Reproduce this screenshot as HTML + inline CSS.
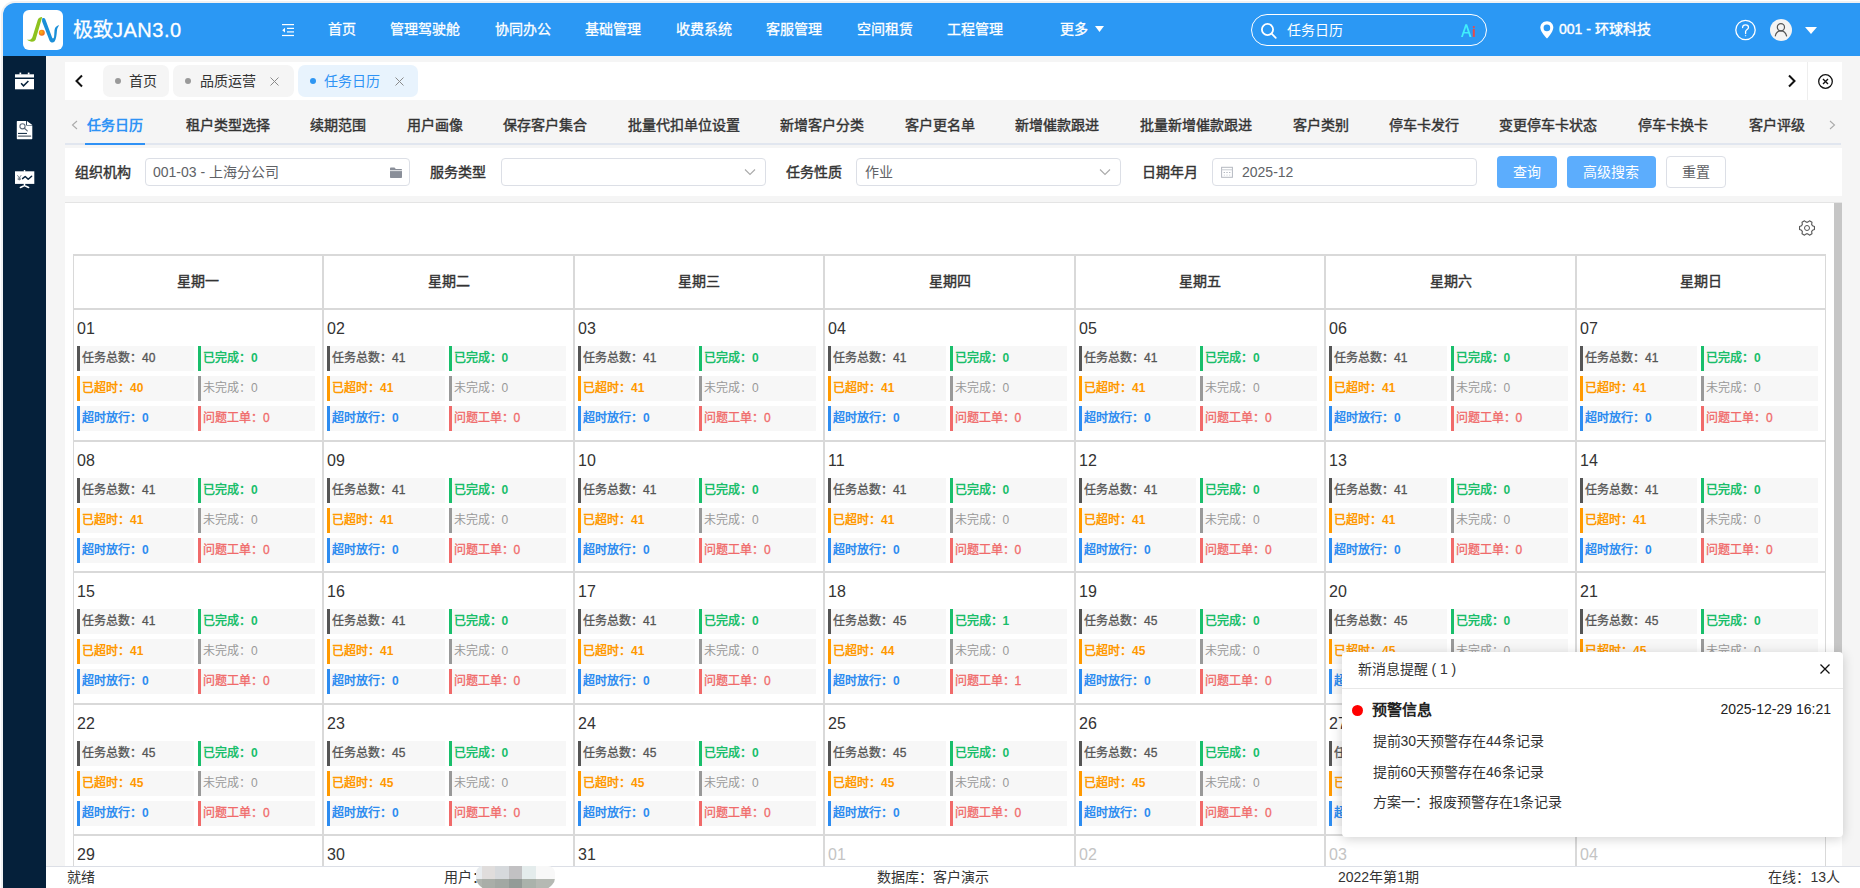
<!DOCTYPE html><html lang="zh-CN"><head><meta charset="utf-8"><title>任务日历</title><style>
*{box-sizing:border-box;margin:0;padding:0}
html,body{width:1860px;height:888px;overflow:hidden;background:#fff}
body{position:relative;font-family:"Liberation Sans",sans-serif;font-size:14px;color:#333}
.a{position:absolute;white-space:nowrap}
.t14{font-size:14px;line-height:20px;height:20px}
.t12{font-size:12px;line-height:16px;height:16px}
.b{font-weight:bold}
.m{font-weight:normal;-webkit-text-stroke:0.4px currentColor}
.m3{-webkit-text-stroke:0.3px currentColor}
</style></head><body>
<div class="a" style="left:1px;top:1px;width:1859px;height:887px;border-top-left-radius:14px;background:#f0f1f3"></div>
<div class="a" style="left:3px;top:3px;width:1857px;height:885px;border-top-left-radius:12px;background:#f5f5f5"></div>
<div class="a" style="left:3px;top:3px;width:1857px;height:53px;background:#2b98f4;border-top-left-radius:12px"></div>
<div class="a" style="left:3px;top:56px;width:43px;height:832px;background:#05203a"></div>
<div class="a" style="left:23px;top:10px;width:40px;height:40px;background:#fff;border-radius:6px">
<svg width="40" height="40" viewBox="0 0 40 40" style="position:absolute;left:0;top:0">
<defs><radialGradient id="og" cx="0.4" cy="0.4" r="0.6"><stop offset="0" stop-color="#fbb516"/><stop offset="1" stop-color="#f26a1b"/></radialGradient></defs>
<path d="M14.8 9.8 C15.6 8 17.3 7 19.2 7.1 L12.6 29.8 C11.2 32.3 7.2 32.4 3.8 29.6 C6.8 30.2 8.6 29.3 9.4 27.2 Z" fill="#8dc21f"/>
<path d="M19.1 8.6 C19.9 7.7 21.6 7.8 22.4 9.6 L29.1 27.4 C29.6 28.8 30.6 28.8 31 27.3 C31.5 24.2 31.1 20.4 32 18.3 C32.9 16.4 34.4 15.6 36.2 15.3 C34.6 17.1 34.1 19.1 33.9 21.2 C33.6 25.2 33.1 29.2 31.6 31.5 C30.1 33.2 27.6 32.8 26.5 30.5 L19.1 11.6 Z" fill="#1b8fd8"/>
<circle cx="18.8" cy="22.7" r="3" fill="url(#og)"/>
</svg></div>
<div class="a m3" style="left:73px;top:18px;font-size:20px;line-height:24px;color:#fff">极致<span style="letter-spacing:0.5px">JAN3.0</span></div>
<svg class="a" style="left:281px;top:23px" width="14" height="14" viewBox="0 0 14 14">
<rect x="1" y="1" width="12" height="1.2" fill="#fff"/><rect x="6" y="4.8" width="7" height="1.2" fill="#fff"/>
<rect x="6" y="8.3" width="7" height="1.2" fill="#fff"/><rect x="1" y="11.9" width="12" height="1.2" fill="#fff"/>
<path d="M1.2 7.2 L4 4.8 L4 9.6Z" fill="#fff"/></svg>
<div class="a t14 m3" style="left:328px;top:19px;color:#fff">首页</div>
<div class="a t14 m3" style="left:390px;top:19px;color:#fff">管理驾驶舱</div>
<div class="a t14 m3" style="left:495px;top:19px;color:#fff">协同办公</div>
<div class="a t14 m3" style="left:585px;top:19px;color:#fff">基础管理</div>
<div class="a t14 m3" style="left:675.5px;top:19px;color:#fff">收费系统</div>
<div class="a t14 m3" style="left:766px;top:19px;color:#fff">客服管理</div>
<div class="a t14 m3" style="left:856.5px;top:19px;color:#fff">空间租赁</div>
<div class="a t14 m3" style="left:947px;top:19px;color:#fff">工程管理</div>
<div class="a t14 m3" style="left:1060px;top:19px;color:#fff">更多</div>
<svg class="a" style="left:1095px;top:26px" width="9" height="6" viewBox="0 0 9 6"><path d="M0 0H9L4.5 6Z" fill="#fff"/></svg>
<div class="a" style="left:1251px;top:14px;width:236px;height:32px;border:1.3px solid #fff;border-radius:16px"></div>
<svg class="a" style="left:1260px;top:21.6px" width="18" height="18" viewBox="0 0 18 18">
<circle cx="7.5" cy="7.5" r="5.6" fill="none" stroke="#fff" stroke-width="1.8"/><path d="M11.6 11.6 L15.8 15.8" stroke="#fff" stroke-width="1.7" stroke-linecap="round"/></svg>
<div class="a t14" style="left:1287px;top:20px;color:#fff">任务日历</div>
<svg class="a" style="left:1460px;top:23px" width="18" height="15" viewBox="0 0 18 15">
<path d="M1 13.9 L5.3 1.3 H7.1 L11.5 13.9 H9.5 L8.4 10.6 H4 L2.9 13.9Z M4.6 8.9 H7.8 L6.2 3.9Z" fill="#40eefc"/>
<circle cx="13.8" cy="4.1" r="1.1" fill="#e84a4a"/><rect x="12.8" y="6" width="2" height="7.9" fill="#e84a4a"/></svg>
<svg class="a" style="left:1539.5px;top:20.5px" width="14" height="18" viewBox="0 0 14 18">
<path d="M7 0.3 C3.1 0.3 0.3 3.2 0.3 6.8 C0.3 10.8 7 17.6 7 17.6 C7 17.6 13.3 10.8 13.3 6.8 C13.3 3.2 10.8 0.3 7 0.3Z" fill="#fff"/><circle cx="6.9" cy="6.9" r="3.3" fill="#2b98f4"/></svg>
<div class="a t14 m" style="left:1559px;top:19px;color:#fff">001 - 环球科技</div>
<svg class="a" style="left:1734px;top:19px" width="23" height="22" viewBox="0 0 23 22">
<circle cx="11.5" cy="11" r="9.7" fill="none" stroke="#fff" stroke-width="1.3"/>
<path d="M8.6 8.6 C8.6 6.8 9.9 5.8 11.6 5.8 C13.3 5.8 14.5 6.9 14.5 8.4 C14.5 10.3 12 10.6 11.6 12.4 L11.6 14.6" fill="none" stroke="#fff" stroke-width="1.3" stroke-linecap="round"/>
<path d="M10.7 16.3 L12.5 16.3 L11.6 17.6Z" fill="#fff"/></svg>
<svg class="a" style="left:1770px;top:19px" width="22" height="22" viewBox="0 0 22 22">
<circle cx="11" cy="11" r="11" fill="#f3f3f3"/>
<circle cx="10.9" cy="8.2" r="3.6" fill="none" stroke="#555" stroke-width="1.2"/>
<path d="M5.3 17 C6 13.6 8.2 11.8 10.9 11.8 C13.6 11.8 15.8 13.6 16.6 17" fill="none" stroke="#555" stroke-width="1.2" stroke-linecap="round"/></svg>
<svg class="a" style="left:1805px;top:27px" width="12" height="7" viewBox="0 0 12 7"><path d="M0 0H12L6 7Z" fill="#fff"/></svg>
<svg class="a" style="left:14px;top:71px" width="21" height="20" viewBox="0 0 21 20">
<rect x="1" y="3.3" width="19" height="3.2" fill="#fff"/><rect x="5.5" y="1.6" width="1.7" height="2" fill="#fff"/><rect x="13.8" y="1.6" width="1.7" height="2" fill="#fff"/>
<rect x="1" y="8" width="19" height="10.3" fill="#fff"/>
<path d="M7.1 12.2 L9.5 14.8 L14.4 10" fill="none" stroke="#05203a" stroke-width="1.5"/></svg>
<svg class="a" style="left:15px;top:120px" width="19" height="20" viewBox="0 0 19 20">
<path d="M1.8 1.4 C1.8 1.1 2.1 0.9 2.4 0.9 H11.2 V5.6 H17.3 V18.6 C17.3 18.9 17 19.2 16.7 19.2 H2.4 C2.1 19.2 1.8 18.9 1.8 18.6Z" fill="#fff"/>
<path d="M12 1 L17.3 5.1 H12Z" fill="#fff"/>
<circle cx="7.5" cy="6.3" r="2.6" fill="none" stroke="#5d6a7a" stroke-width="1.1"/><path d="M9.4 8.3 L12.3 10.9" stroke="#5d6a7a" stroke-width="1.2" stroke-linecap="round"/>
<path d="M3.4 13.4 H11.6" stroke="#05203a" stroke-width="1" stroke-linecap="round"/><path d="M3.4 16.1 H15.6" stroke="#56616e" stroke-width="1.4" stroke-linecap="round"/></svg>
<svg class="a" style="left:14px;top:169px" width="21" height="20" viewBox="0 0 21 20">
<rect x="1" y="2.3" width="19.3" height="12.6" fill="#fff"/><rect x="9.7" y="0.9" width="1.7" height="2" rx="0.8" fill="#fff"/>
<path d="M10.5 14.5 V16.6 M6.4 18.5 L10.5 16.6 L14.6 18.5" stroke="#fff" stroke-width="1.6" fill="none" stroke-linecap="round"/>
<path d="M3.4 6.2 L5.3 8.8 L7.2 6.2 M5.3 8.8 V11.4 M3.7 9.2 H6.9 M3.7 10.4 H6.9" stroke="#6b7682" stroke-width="0.9" fill="none"/>
<path d="M8.6 9.6 L11.2 7.5 L14.2 10.2 L17.6 7.3" fill="none" stroke="#05203a" stroke-width="1.5" stroke-linejoin="round" stroke-linecap="round"/></svg>
<div class="a" style="left:65px;top:62px;width:1777px;height:38px;background:#fff"></div>
<svg class="a" style="left:74px;top:74px" width="10" height="14" viewBox="0 0 10 14"><path d="M8 1.5 L2.5 7 L8 12.5" fill="none" stroke="#111" stroke-width="2"/></svg>
<div class="a" style="left:103px;top:65px;width:66px;height:32px;background:#f5f5f5;border-radius:7px"></div>
<div class="a" style="left:115px;top:78px;width:6px;height:6px;border-radius:3px;background:#999"></div>
<div class="a t14" style="left:129px;top:71px;color:#333">首页</div>
<div class="a" style="left:173px;top:65px;width:121px;height:32px;background:#f5f5f5;border-radius:7px"></div>
<div class="a" style="left:185px;top:78px;width:6px;height:6px;border-radius:3px;background:#999"></div>
<div class="a t14" style="left:199.5px;top:71px;color:#333">品质运营</div>
<svg class="a" style="left:270px;top:77px" width="9" height="9" viewBox="0 0 9 9"><path d="M0.5 0.5L8.5 8.5M8.5 0.5L0.5 8.5" stroke="#8a8a8a" stroke-width="1"/></svg>
<div class="a" style="left:298px;top:65px;width:120px;height:32px;background:#e8f3fd;border-radius:7px"></div>
<div class="a" style="left:310px;top:78px;width:6px;height:6px;border-radius:3px;background:#2e96f3"></div>
<div class="a t14" style="left:324px;top:71px;color:#2f93f5">任务日历</div>
<svg class="a" style="left:394.5px;top:77px" width="9" height="9" viewBox="0 0 9 9"><path d="M0.5 0.5L8.5 8.5M8.5 0.5L0.5 8.5" stroke="#8a8a8a" stroke-width="1"/></svg>
<div class="a" style="left:1807px;top:62px;width:1px;height:38px;background:#eee"></div>
<svg class="a" style="left:1787px;top:74px" width="10" height="14" viewBox="0 0 10 14"><path d="M2 1.5 L7.5 7 L2 12.5" fill="none" stroke="#111" stroke-width="2"/></svg>
<svg class="a" style="left:1816.5px;top:72.5px" width="17" height="17" viewBox="0 0 17 17"><circle cx="8.5" cy="8.5" r="6.8" fill="none" stroke="#111" stroke-width="1.3"/>
<path d="M6 6L11 11M11 6L6 11" stroke="#111" stroke-width="1.4"/></svg>
<svg class="a" style="left:71px;top:120px" width="7" height="10" viewBox="0 0 7 10"><path d="M6 1 L1.5 5 L6 9" fill="none" stroke="#aaa" stroke-width="1.1"/></svg>
<div class="a t14 b" style="left:86.5px;top:115px;color:#2f93f5">任务日历</div>
<div class="a t14 m" style="left:185.5px;top:115px;color:#333">租户类型选择</div>
<div class="a t14 m" style="left:310px;top:115px;color:#333">续期范围</div>
<div class="a t14 m" style="left:406.5px;top:115px;color:#333">用户画像</div>
<div class="a t14 m" style="left:502.5px;top:115px;color:#333">保存客户集合</div>
<div class="a t14 m" style="left:627.5px;top:115px;color:#333">批量代扣单位设置</div>
<div class="a t14 m" style="left:780px;top:115px;color:#333">新增客户分类</div>
<div class="a t14 m" style="left:904.5px;top:115px;color:#333">客户更名单</div>
<div class="a t14 m" style="left:1015px;top:115px;color:#333">新增催款跟进</div>
<div class="a t14 m" style="left:1140px;top:115px;color:#333">批量新增催款跟进</div>
<div class="a t14 m" style="left:1292.5px;top:115px;color:#333">客户类别</div>
<div class="a t14 m" style="left:1389px;top:115px;color:#333">停车卡发行</div>
<div class="a t14 m" style="left:1499px;top:115px;color:#333">变更停车卡状态</div>
<div class="a t14 m" style="left:1638px;top:115px;color:#333">停车卡换卡</div>
<div class="a t14 m" style="left:1749px;top:115px;color:#333">客户评级</div>
<svg class="a" style="left:1829px;top:120px" width="7" height="10" viewBox="0 0 7 10"><path d="M1 1 L5.5 5 L1 9" fill="none" stroke="#aaa" stroke-width="1.1"/></svg>
<div class="a" style="left:65px;top:143px;width:1776px;height:2px;background:#e1e6ef"></div>
<div class="a" style="left:85px;top:143px;width:60px;height:2px;background:#2f91f5"></div>
<div class="a" style="left:65px;top:148px;width:1777px;height:48px;background:#fff"></div>
<div class="a t14 m" style="left:74.5px;top:162px;color:#333">组织机构</div>
<div class="a" style="left:145px;top:158px;width:265px;height:28px;border:1px solid #dcdfe6;border-radius:4px;background:#fff"></div>
<div class="a t14" style="left:153px;top:162px;color:#606266">001-03 - 上海分公司</div>
<svg class="a" style="left:390px;top:167px" width="12" height="11" viewBox="0 0 12 11"><path d="M0 1.5 C0 1 .4 .5 1 .5 H4.5 L5.8 2 H11 C11.6 2 12 2.4 12 3 V10 C12 10.6 11.6 11 11 11 H1 C.4 11 0 10.6 0 10Z" fill="#8a8f99"/><rect x="0" y="3.3" width="12" height="0.8" fill="#fff"/></svg>
<div class="a t14 m" style="left:430px;top:162px;color:#333">服务类型</div>
<div class="a" style="left:501px;top:158px;width:265px;height:28px;border:1px solid #dcdfe6;border-radius:4px;background:#fff"></div>
<svg class="a" style="left:744px;top:168px" width="12" height="8" viewBox="0 0 12 8"><path d="M1 1.5 L6 6.5 L11 1.5" fill="none" stroke="#aaa" stroke-width="1.1"/></svg>
<div class="a t14 m" style="left:786px;top:162px;color:#333">任务性质</div>
<div class="a" style="left:856px;top:158px;width:265px;height:28px;border:1px solid #dcdfe6;border-radius:4px;background:#fff"></div>
<div class="a t14" style="left:865px;top:162px;color:#606266">作业</div>
<svg class="a" style="left:1099px;top:168px" width="12" height="8" viewBox="0 0 12 8"><path d="M1 1.5 L6 6.5 L11 1.5" fill="none" stroke="#aaa" stroke-width="1.1"/></svg>
<div class="a t14 m" style="left:1142px;top:162px;color:#333">日期年月</div>
<div class="a" style="left:1212px;top:158px;width:265px;height:28px;border:1px solid #dcdfe6;border-radius:4px;background:#fff"></div>
<svg class="a" style="left:1221px;top:166px" width="12" height="12" viewBox="0 0 12 12"><rect x="0.6" y="1.3" width="10.8" height="10" fill="none" stroke="#b4b8c0" stroke-width="1"/><path d="M0.6 3.8 H11.4" stroke="#c8ccd2" stroke-width="1"/>
<rect x="2.6" y="6" width="1.4" height="1" fill="#b4b8c0"/><rect x="5.3" y="6" width="1.4" height="1" fill="#b4b8c0"/><rect x="8" y="6" width="1.4" height="1" fill="#b4b8c0"/>
<rect x="2.8" y="8.6" width="1" height="1" fill="#c8ccd2"/><rect x="5.5" y="8.6" width="1" height="1" fill="#c8ccd2"/><rect x="8.2" y="8.6" width="1" height="1" fill="#c8ccd2"/></svg>
<div class="a t14" style="left:1242px;top:162px;color:#606266">2025-12</div>
<div class="a" style="left:1497px;top:156px;width:60px;height:32px;background:#5cadfd;border-radius:4px"></div>
<div class="a t14" style="left:1513px;top:162px;color:#fff">查询</div>
<div class="a" style="left:1567px;top:156px;width:89px;height:32px;background:#5cadfd;border-radius:4px"></div>
<div class="a t14" style="left:1583px;top:162px;color:#fff">高级搜索</div>
<div class="a" style="left:1666px;top:156px;width:60px;height:32px;background:#fff;border:1px solid #dcdfe6;border-radius:4px"></div>
<div class="a t14" style="left:1682px;top:162px;color:#606266">重置</div>
<div class="a" style="left:65px;top:202px;width:1777px;height:664px;background:#fff;border-top:1px solid #e4e4e4"></div>
<div class="a" style="left:1834px;top:203px;width:8px;height:560px;background:#c6c6c6"></div>
<svg class="a" style="left:1798px;top:219.4px" width="18" height="18" viewBox="0 0 18 18">
<path d="M14.47 6.79 L16.46 7.55 L16.46 10.45 L14.47 11.21 L13.65 12.63 L13.99 14.74 L11.47 16.19 L9.82 14.84 L8.18 14.84 L6.53 16.19 L4.01 14.74 L4.35 12.63 L3.53 11.21 L1.54 10.45 L1.54 7.55 L3.53 6.79 L4.35 5.37 L4.01 3.26 L6.53 1.81 L8.18 3.16 L9.82 3.16 L11.47 1.81 L13.99 3.26 L13.65 5.37Z" fill="none" stroke="#555" stroke-width="1.1" stroke-linejoin="round"/>
<circle cx="9" cy="9" r="2.5" fill="none" stroke="#555" stroke-width="1"/></svg>
<div class="a" style="left:73px;top:254px;width:1753px;height:2px;background:#d9d9d9"></div>
<div class="a" style="left:73px;top:308px;width:1753px;height:2px;background:#d9d9d9"></div>
<div class="a" style="left:73px;top:440px;width:1753px;height:2px;background:#d9d9d9"></div>
<div class="a" style="left:73px;top:571px;width:1753px;height:2px;background:#d9d9d9"></div>
<div class="a" style="left:73px;top:703px;width:1753px;height:2px;background:#d9d9d9"></div>
<div class="a" style="left:73px;top:834px;width:1753px;height:2px;background:#d9d9d9"></div>
<div class="a" style="left:73px;top:254px;width:1px;height:612px;background:#d9d9d9"></div>
<div class="a" style="left:322px;top:254px;width:2px;height:612px;background:#d9d9d9"></div>
<div class="a" style="left:573px;top:254px;width:2px;height:612px;background:#d9d9d9"></div>
<div class="a" style="left:823px;top:254px;width:2px;height:612px;background:#d9d9d9"></div>
<div class="a" style="left:1074px;top:254px;width:2px;height:612px;background:#d9d9d9"></div>
<div class="a" style="left:1324px;top:254px;width:2px;height:612px;background:#d9d9d9"></div>
<div class="a" style="left:1575px;top:254px;width:2px;height:612px;background:#d9d9d9"></div>
<div class="a" style="left:1825px;top:254px;width:1px;height:612px;background:#d9d9d9"></div>
<div class="a t14 m" style="left:138.0px;width:120px;text-align:center;top:271px;color:#333">星期一</div>
<div class="a t14 m" style="left:388.5px;width:120px;text-align:center;top:271px;color:#333">星期二</div>
<div class="a t14 m" style="left:639.0px;width:120px;text-align:center;top:271px;color:#333">星期三</div>
<div class="a t14 m" style="left:889.5px;width:120px;text-align:center;top:271px;color:#333">星期四</div>
<div class="a t14 m" style="left:1140.0px;width:120px;text-align:center;top:271px;color:#333">星期五</div>
<div class="a t14 m" style="left:1390.5px;width:120px;text-align:center;top:271px;color:#333">星期六</div>
<div class="a t14 m" style="left:1641.0px;width:120px;text-align:center;top:271px;color:#333">星期日</div>
<div class="a" style="left:77px;top:319px;font-size:16px;line-height:20px;color:#333">01</div>
<div class="a" style="left:77.0px;top:346px;width:117.0px;height:25px;background:#f7f7f7;border-left:3px solid #555"></div>
<div class="a t12 m3" style="left:82.0px;top:350px;color:#555;font-weight:normal">任务总数：40</div>
<div class="a" style="left:198.0px;top:346px;width:117.0px;height:25px;background:#f7f7f7;border-left:3px solid #19be6b"></div>
<div class="a t12" style="left:203.0px;top:350px;color:#19be6b;font-weight:bold">已完成：0</div>
<div class="a" style="left:77.0px;top:376px;width:117.0px;height:25px;background:#f7f7f7;border-left:3px solid #ff9900"></div>
<div class="a t12" style="left:82.0px;top:380px;color:#ff9900;font-weight:bold">已超时：40</div>
<div class="a" style="left:198.0px;top:376px;width:117.0px;height:25px;background:#f7f7f7;border-left:3px solid #999"></div>
<div class="a t12" style="left:203.0px;top:380px;color:#999;font-weight:normal">未完成：0</div>
<div class="a" style="left:77.0px;top:406px;width:117.0px;height:25px;background:#f7f7f7;border-left:3px solid #2d8cf0"></div>
<div class="a t12" style="left:82.0px;top:410px;color:#2d8cf0;font-weight:bold">超时放行：0</div>
<div class="a" style="left:198.0px;top:406px;width:117.0px;height:25px;background:#f7f7f7;border-left:3px solid #f06a6a"></div>
<div class="a t12 m3" style="left:203.0px;top:410px;color:#f06a6a;font-weight:normal">问题工单：0</div>
<div class="a" style="left:327px;top:319px;font-size:16px;line-height:20px;color:#333">02</div>
<div class="a" style="left:327.0px;top:346px;width:117.5px;height:25px;background:#f7f7f7;border-left:3px solid #555"></div>
<div class="a t12 m3" style="left:332.0px;top:350px;color:#555;font-weight:normal">任务总数：41</div>
<div class="a" style="left:448.5px;top:346px;width:117.5px;height:25px;background:#f7f7f7;border-left:3px solid #19be6b"></div>
<div class="a t12" style="left:453.5px;top:350px;color:#19be6b;font-weight:bold">已完成：0</div>
<div class="a" style="left:327.0px;top:376px;width:117.5px;height:25px;background:#f7f7f7;border-left:3px solid #ff9900"></div>
<div class="a t12" style="left:332.0px;top:380px;color:#ff9900;font-weight:bold">已超时：41</div>
<div class="a" style="left:448.5px;top:376px;width:117.5px;height:25px;background:#f7f7f7;border-left:3px solid #999"></div>
<div class="a t12" style="left:453.5px;top:380px;color:#999;font-weight:normal">未完成：0</div>
<div class="a" style="left:327.0px;top:406px;width:117.5px;height:25px;background:#f7f7f7;border-left:3px solid #2d8cf0"></div>
<div class="a t12" style="left:332.0px;top:410px;color:#2d8cf0;font-weight:bold">超时放行：0</div>
<div class="a" style="left:448.5px;top:406px;width:117.5px;height:25px;background:#f7f7f7;border-left:3px solid #f06a6a"></div>
<div class="a t12 m3" style="left:453.5px;top:410px;color:#f06a6a;font-weight:normal">问题工单：0</div>
<div class="a" style="left:578px;top:319px;font-size:16px;line-height:20px;color:#333">03</div>
<div class="a" style="left:578.0px;top:346px;width:117.0px;height:25px;background:#f7f7f7;border-left:3px solid #555"></div>
<div class="a t12 m3" style="left:583.0px;top:350px;color:#555;font-weight:normal">任务总数：41</div>
<div class="a" style="left:699.0px;top:346px;width:117.0px;height:25px;background:#f7f7f7;border-left:3px solid #19be6b"></div>
<div class="a t12" style="left:704.0px;top:350px;color:#19be6b;font-weight:bold">已完成：0</div>
<div class="a" style="left:578.0px;top:376px;width:117.0px;height:25px;background:#f7f7f7;border-left:3px solid #ff9900"></div>
<div class="a t12" style="left:583.0px;top:380px;color:#ff9900;font-weight:bold">已超时：41</div>
<div class="a" style="left:699.0px;top:376px;width:117.0px;height:25px;background:#f7f7f7;border-left:3px solid #999"></div>
<div class="a t12" style="left:704.0px;top:380px;color:#999;font-weight:normal">未完成：0</div>
<div class="a" style="left:578.0px;top:406px;width:117.0px;height:25px;background:#f7f7f7;border-left:3px solid #2d8cf0"></div>
<div class="a t12" style="left:583.0px;top:410px;color:#2d8cf0;font-weight:bold">超时放行：0</div>
<div class="a" style="left:699.0px;top:406px;width:117.0px;height:25px;background:#f7f7f7;border-left:3px solid #f06a6a"></div>
<div class="a t12 m3" style="left:704.0px;top:410px;color:#f06a6a;font-weight:normal">问题工单：0</div>
<div class="a" style="left:828px;top:319px;font-size:16px;line-height:20px;color:#333">04</div>
<div class="a" style="left:828.0px;top:346px;width:117.5px;height:25px;background:#f7f7f7;border-left:3px solid #555"></div>
<div class="a t12 m3" style="left:833.0px;top:350px;color:#555;font-weight:normal">任务总数：41</div>
<div class="a" style="left:949.5px;top:346px;width:117.5px;height:25px;background:#f7f7f7;border-left:3px solid #19be6b"></div>
<div class="a t12" style="left:954.5px;top:350px;color:#19be6b;font-weight:bold">已完成：0</div>
<div class="a" style="left:828.0px;top:376px;width:117.5px;height:25px;background:#f7f7f7;border-left:3px solid #ff9900"></div>
<div class="a t12" style="left:833.0px;top:380px;color:#ff9900;font-weight:bold">已超时：41</div>
<div class="a" style="left:949.5px;top:376px;width:117.5px;height:25px;background:#f7f7f7;border-left:3px solid #999"></div>
<div class="a t12" style="left:954.5px;top:380px;color:#999;font-weight:normal">未完成：0</div>
<div class="a" style="left:828.0px;top:406px;width:117.5px;height:25px;background:#f7f7f7;border-left:3px solid #2d8cf0"></div>
<div class="a t12" style="left:833.0px;top:410px;color:#2d8cf0;font-weight:bold">超时放行：0</div>
<div class="a" style="left:949.5px;top:406px;width:117.5px;height:25px;background:#f7f7f7;border-left:3px solid #f06a6a"></div>
<div class="a t12 m3" style="left:954.5px;top:410px;color:#f06a6a;font-weight:normal">问题工单：0</div>
<div class="a" style="left:1079px;top:319px;font-size:16px;line-height:20px;color:#333">05</div>
<div class="a" style="left:1079.0px;top:346px;width:117.0px;height:25px;background:#f7f7f7;border-left:3px solid #555"></div>
<div class="a t12 m3" style="left:1084.0px;top:350px;color:#555;font-weight:normal">任务总数：41</div>
<div class="a" style="left:1200.0px;top:346px;width:117.0px;height:25px;background:#f7f7f7;border-left:3px solid #19be6b"></div>
<div class="a t12" style="left:1205.0px;top:350px;color:#19be6b;font-weight:bold">已完成：0</div>
<div class="a" style="left:1079.0px;top:376px;width:117.0px;height:25px;background:#f7f7f7;border-left:3px solid #ff9900"></div>
<div class="a t12" style="left:1084.0px;top:380px;color:#ff9900;font-weight:bold">已超时：41</div>
<div class="a" style="left:1200.0px;top:376px;width:117.0px;height:25px;background:#f7f7f7;border-left:3px solid #999"></div>
<div class="a t12" style="left:1205.0px;top:380px;color:#999;font-weight:normal">未完成：0</div>
<div class="a" style="left:1079.0px;top:406px;width:117.0px;height:25px;background:#f7f7f7;border-left:3px solid #2d8cf0"></div>
<div class="a t12" style="left:1084.0px;top:410px;color:#2d8cf0;font-weight:bold">超时放行：0</div>
<div class="a" style="left:1200.0px;top:406px;width:117.0px;height:25px;background:#f7f7f7;border-left:3px solid #f06a6a"></div>
<div class="a t12 m3" style="left:1205.0px;top:410px;color:#f06a6a;font-weight:normal">问题工单：0</div>
<div class="a" style="left:1329px;top:319px;font-size:16px;line-height:20px;color:#333">06</div>
<div class="a" style="left:1329.0px;top:346px;width:117.5px;height:25px;background:#f7f7f7;border-left:3px solid #555"></div>
<div class="a t12 m3" style="left:1334.0px;top:350px;color:#555;font-weight:normal">任务总数：41</div>
<div class="a" style="left:1450.5px;top:346px;width:117.5px;height:25px;background:#f7f7f7;border-left:3px solid #19be6b"></div>
<div class="a t12" style="left:1455.5px;top:350px;color:#19be6b;font-weight:bold">已完成：0</div>
<div class="a" style="left:1329.0px;top:376px;width:117.5px;height:25px;background:#f7f7f7;border-left:3px solid #ff9900"></div>
<div class="a t12" style="left:1334.0px;top:380px;color:#ff9900;font-weight:bold">已超时：41</div>
<div class="a" style="left:1450.5px;top:376px;width:117.5px;height:25px;background:#f7f7f7;border-left:3px solid #999"></div>
<div class="a t12" style="left:1455.5px;top:380px;color:#999;font-weight:normal">未完成：0</div>
<div class="a" style="left:1329.0px;top:406px;width:117.5px;height:25px;background:#f7f7f7;border-left:3px solid #2d8cf0"></div>
<div class="a t12" style="left:1334.0px;top:410px;color:#2d8cf0;font-weight:bold">超时放行：0</div>
<div class="a" style="left:1450.5px;top:406px;width:117.5px;height:25px;background:#f7f7f7;border-left:3px solid #f06a6a"></div>
<div class="a t12 m3" style="left:1455.5px;top:410px;color:#f06a6a;font-weight:normal">问题工单：0</div>
<div class="a" style="left:1580px;top:319px;font-size:16px;line-height:20px;color:#333">07</div>
<div class="a" style="left:1580.0px;top:346px;width:117.0px;height:25px;background:#f7f7f7;border-left:3px solid #555"></div>
<div class="a t12 m3" style="left:1585.0px;top:350px;color:#555;font-weight:normal">任务总数：41</div>
<div class="a" style="left:1701.0px;top:346px;width:117.0px;height:25px;background:#f7f7f7;border-left:3px solid #19be6b"></div>
<div class="a t12" style="left:1706.0px;top:350px;color:#19be6b;font-weight:bold">已完成：0</div>
<div class="a" style="left:1580.0px;top:376px;width:117.0px;height:25px;background:#f7f7f7;border-left:3px solid #ff9900"></div>
<div class="a t12" style="left:1585.0px;top:380px;color:#ff9900;font-weight:bold">已超时：41</div>
<div class="a" style="left:1701.0px;top:376px;width:117.0px;height:25px;background:#f7f7f7;border-left:3px solid #999"></div>
<div class="a t12" style="left:1706.0px;top:380px;color:#999;font-weight:normal">未完成：0</div>
<div class="a" style="left:1580.0px;top:406px;width:117.0px;height:25px;background:#f7f7f7;border-left:3px solid #2d8cf0"></div>
<div class="a t12" style="left:1585.0px;top:410px;color:#2d8cf0;font-weight:bold">超时放行：0</div>
<div class="a" style="left:1701.0px;top:406px;width:117.0px;height:25px;background:#f7f7f7;border-left:3px solid #f06a6a"></div>
<div class="a t12 m3" style="left:1706.0px;top:410px;color:#f06a6a;font-weight:normal">问题工单：0</div>
<div class="a" style="left:77px;top:451px;font-size:16px;line-height:20px;color:#333">08</div>
<div class="a" style="left:77.0px;top:478px;width:117.0px;height:25px;background:#f7f7f7;border-left:3px solid #555"></div>
<div class="a t12 m3" style="left:82.0px;top:482px;color:#555;font-weight:normal">任务总数：41</div>
<div class="a" style="left:198.0px;top:478px;width:117.0px;height:25px;background:#f7f7f7;border-left:3px solid #19be6b"></div>
<div class="a t12" style="left:203.0px;top:482px;color:#19be6b;font-weight:bold">已完成：0</div>
<div class="a" style="left:77.0px;top:508px;width:117.0px;height:25px;background:#f7f7f7;border-left:3px solid #ff9900"></div>
<div class="a t12" style="left:82.0px;top:512px;color:#ff9900;font-weight:bold">已超时：41</div>
<div class="a" style="left:198.0px;top:508px;width:117.0px;height:25px;background:#f7f7f7;border-left:3px solid #999"></div>
<div class="a t12" style="left:203.0px;top:512px;color:#999;font-weight:normal">未完成：0</div>
<div class="a" style="left:77.0px;top:538px;width:117.0px;height:25px;background:#f7f7f7;border-left:3px solid #2d8cf0"></div>
<div class="a t12" style="left:82.0px;top:542px;color:#2d8cf0;font-weight:bold">超时放行：0</div>
<div class="a" style="left:198.0px;top:538px;width:117.0px;height:25px;background:#f7f7f7;border-left:3px solid #f06a6a"></div>
<div class="a t12 m3" style="left:203.0px;top:542px;color:#f06a6a;font-weight:normal">问题工单：0</div>
<div class="a" style="left:327px;top:451px;font-size:16px;line-height:20px;color:#333">09</div>
<div class="a" style="left:327.0px;top:478px;width:117.5px;height:25px;background:#f7f7f7;border-left:3px solid #555"></div>
<div class="a t12 m3" style="left:332.0px;top:482px;color:#555;font-weight:normal">任务总数：41</div>
<div class="a" style="left:448.5px;top:478px;width:117.5px;height:25px;background:#f7f7f7;border-left:3px solid #19be6b"></div>
<div class="a t12" style="left:453.5px;top:482px;color:#19be6b;font-weight:bold">已完成：0</div>
<div class="a" style="left:327.0px;top:508px;width:117.5px;height:25px;background:#f7f7f7;border-left:3px solid #ff9900"></div>
<div class="a t12" style="left:332.0px;top:512px;color:#ff9900;font-weight:bold">已超时：41</div>
<div class="a" style="left:448.5px;top:508px;width:117.5px;height:25px;background:#f7f7f7;border-left:3px solid #999"></div>
<div class="a t12" style="left:453.5px;top:512px;color:#999;font-weight:normal">未完成：0</div>
<div class="a" style="left:327.0px;top:538px;width:117.5px;height:25px;background:#f7f7f7;border-left:3px solid #2d8cf0"></div>
<div class="a t12" style="left:332.0px;top:542px;color:#2d8cf0;font-weight:bold">超时放行：0</div>
<div class="a" style="left:448.5px;top:538px;width:117.5px;height:25px;background:#f7f7f7;border-left:3px solid #f06a6a"></div>
<div class="a t12 m3" style="left:453.5px;top:542px;color:#f06a6a;font-weight:normal">问题工单：0</div>
<div class="a" style="left:578px;top:451px;font-size:16px;line-height:20px;color:#333">10</div>
<div class="a" style="left:578.0px;top:478px;width:117.0px;height:25px;background:#f7f7f7;border-left:3px solid #555"></div>
<div class="a t12 m3" style="left:583.0px;top:482px;color:#555;font-weight:normal">任务总数：41</div>
<div class="a" style="left:699.0px;top:478px;width:117.0px;height:25px;background:#f7f7f7;border-left:3px solid #19be6b"></div>
<div class="a t12" style="left:704.0px;top:482px;color:#19be6b;font-weight:bold">已完成：0</div>
<div class="a" style="left:578.0px;top:508px;width:117.0px;height:25px;background:#f7f7f7;border-left:3px solid #ff9900"></div>
<div class="a t12" style="left:583.0px;top:512px;color:#ff9900;font-weight:bold">已超时：41</div>
<div class="a" style="left:699.0px;top:508px;width:117.0px;height:25px;background:#f7f7f7;border-left:3px solid #999"></div>
<div class="a t12" style="left:704.0px;top:512px;color:#999;font-weight:normal">未完成：0</div>
<div class="a" style="left:578.0px;top:538px;width:117.0px;height:25px;background:#f7f7f7;border-left:3px solid #2d8cf0"></div>
<div class="a t12" style="left:583.0px;top:542px;color:#2d8cf0;font-weight:bold">超时放行：0</div>
<div class="a" style="left:699.0px;top:538px;width:117.0px;height:25px;background:#f7f7f7;border-left:3px solid #f06a6a"></div>
<div class="a t12 m3" style="left:704.0px;top:542px;color:#f06a6a;font-weight:normal">问题工单：0</div>
<div class="a" style="left:828px;top:451px;font-size:16px;line-height:20px;color:#333">11</div>
<div class="a" style="left:828.0px;top:478px;width:117.5px;height:25px;background:#f7f7f7;border-left:3px solid #555"></div>
<div class="a t12 m3" style="left:833.0px;top:482px;color:#555;font-weight:normal">任务总数：41</div>
<div class="a" style="left:949.5px;top:478px;width:117.5px;height:25px;background:#f7f7f7;border-left:3px solid #19be6b"></div>
<div class="a t12" style="left:954.5px;top:482px;color:#19be6b;font-weight:bold">已完成：0</div>
<div class="a" style="left:828.0px;top:508px;width:117.5px;height:25px;background:#f7f7f7;border-left:3px solid #ff9900"></div>
<div class="a t12" style="left:833.0px;top:512px;color:#ff9900;font-weight:bold">已超时：41</div>
<div class="a" style="left:949.5px;top:508px;width:117.5px;height:25px;background:#f7f7f7;border-left:3px solid #999"></div>
<div class="a t12" style="left:954.5px;top:512px;color:#999;font-weight:normal">未完成：0</div>
<div class="a" style="left:828.0px;top:538px;width:117.5px;height:25px;background:#f7f7f7;border-left:3px solid #2d8cf0"></div>
<div class="a t12" style="left:833.0px;top:542px;color:#2d8cf0;font-weight:bold">超时放行：0</div>
<div class="a" style="left:949.5px;top:538px;width:117.5px;height:25px;background:#f7f7f7;border-left:3px solid #f06a6a"></div>
<div class="a t12 m3" style="left:954.5px;top:542px;color:#f06a6a;font-weight:normal">问题工单：0</div>
<div class="a" style="left:1079px;top:451px;font-size:16px;line-height:20px;color:#333">12</div>
<div class="a" style="left:1079.0px;top:478px;width:117.0px;height:25px;background:#f7f7f7;border-left:3px solid #555"></div>
<div class="a t12 m3" style="left:1084.0px;top:482px;color:#555;font-weight:normal">任务总数：41</div>
<div class="a" style="left:1200.0px;top:478px;width:117.0px;height:25px;background:#f7f7f7;border-left:3px solid #19be6b"></div>
<div class="a t12" style="left:1205.0px;top:482px;color:#19be6b;font-weight:bold">已完成：0</div>
<div class="a" style="left:1079.0px;top:508px;width:117.0px;height:25px;background:#f7f7f7;border-left:3px solid #ff9900"></div>
<div class="a t12" style="left:1084.0px;top:512px;color:#ff9900;font-weight:bold">已超时：41</div>
<div class="a" style="left:1200.0px;top:508px;width:117.0px;height:25px;background:#f7f7f7;border-left:3px solid #999"></div>
<div class="a t12" style="left:1205.0px;top:512px;color:#999;font-weight:normal">未完成：0</div>
<div class="a" style="left:1079.0px;top:538px;width:117.0px;height:25px;background:#f7f7f7;border-left:3px solid #2d8cf0"></div>
<div class="a t12" style="left:1084.0px;top:542px;color:#2d8cf0;font-weight:bold">超时放行：0</div>
<div class="a" style="left:1200.0px;top:538px;width:117.0px;height:25px;background:#f7f7f7;border-left:3px solid #f06a6a"></div>
<div class="a t12 m3" style="left:1205.0px;top:542px;color:#f06a6a;font-weight:normal">问题工单：0</div>
<div class="a" style="left:1329px;top:451px;font-size:16px;line-height:20px;color:#333">13</div>
<div class="a" style="left:1329.0px;top:478px;width:117.5px;height:25px;background:#f7f7f7;border-left:3px solid #555"></div>
<div class="a t12 m3" style="left:1334.0px;top:482px;color:#555;font-weight:normal">任务总数：41</div>
<div class="a" style="left:1450.5px;top:478px;width:117.5px;height:25px;background:#f7f7f7;border-left:3px solid #19be6b"></div>
<div class="a t12" style="left:1455.5px;top:482px;color:#19be6b;font-weight:bold">已完成：0</div>
<div class="a" style="left:1329.0px;top:508px;width:117.5px;height:25px;background:#f7f7f7;border-left:3px solid #ff9900"></div>
<div class="a t12" style="left:1334.0px;top:512px;color:#ff9900;font-weight:bold">已超时：41</div>
<div class="a" style="left:1450.5px;top:508px;width:117.5px;height:25px;background:#f7f7f7;border-left:3px solid #999"></div>
<div class="a t12" style="left:1455.5px;top:512px;color:#999;font-weight:normal">未完成：0</div>
<div class="a" style="left:1329.0px;top:538px;width:117.5px;height:25px;background:#f7f7f7;border-left:3px solid #2d8cf0"></div>
<div class="a t12" style="left:1334.0px;top:542px;color:#2d8cf0;font-weight:bold">超时放行：0</div>
<div class="a" style="left:1450.5px;top:538px;width:117.5px;height:25px;background:#f7f7f7;border-left:3px solid #f06a6a"></div>
<div class="a t12 m3" style="left:1455.5px;top:542px;color:#f06a6a;font-weight:normal">问题工单：0</div>
<div class="a" style="left:1580px;top:451px;font-size:16px;line-height:20px;color:#333">14</div>
<div class="a" style="left:1580.0px;top:478px;width:117.0px;height:25px;background:#f7f7f7;border-left:3px solid #555"></div>
<div class="a t12 m3" style="left:1585.0px;top:482px;color:#555;font-weight:normal">任务总数：41</div>
<div class="a" style="left:1701.0px;top:478px;width:117.0px;height:25px;background:#f7f7f7;border-left:3px solid #19be6b"></div>
<div class="a t12" style="left:1706.0px;top:482px;color:#19be6b;font-weight:bold">已完成：0</div>
<div class="a" style="left:1580.0px;top:508px;width:117.0px;height:25px;background:#f7f7f7;border-left:3px solid #ff9900"></div>
<div class="a t12" style="left:1585.0px;top:512px;color:#ff9900;font-weight:bold">已超时：41</div>
<div class="a" style="left:1701.0px;top:508px;width:117.0px;height:25px;background:#f7f7f7;border-left:3px solid #999"></div>
<div class="a t12" style="left:1706.0px;top:512px;color:#999;font-weight:normal">未完成：0</div>
<div class="a" style="left:1580.0px;top:538px;width:117.0px;height:25px;background:#f7f7f7;border-left:3px solid #2d8cf0"></div>
<div class="a t12" style="left:1585.0px;top:542px;color:#2d8cf0;font-weight:bold">超时放行：0</div>
<div class="a" style="left:1701.0px;top:538px;width:117.0px;height:25px;background:#f7f7f7;border-left:3px solid #f06a6a"></div>
<div class="a t12 m3" style="left:1706.0px;top:542px;color:#f06a6a;font-weight:normal">问题工单：0</div>
<div class="a" style="left:77px;top:582px;font-size:16px;line-height:20px;color:#333">15</div>
<div class="a" style="left:77.0px;top:609px;width:117.0px;height:25px;background:#f7f7f7;border-left:3px solid #555"></div>
<div class="a t12 m3" style="left:82.0px;top:613px;color:#555;font-weight:normal">任务总数：41</div>
<div class="a" style="left:198.0px;top:609px;width:117.0px;height:25px;background:#f7f7f7;border-left:3px solid #19be6b"></div>
<div class="a t12" style="left:203.0px;top:613px;color:#19be6b;font-weight:bold">已完成：0</div>
<div class="a" style="left:77.0px;top:639px;width:117.0px;height:25px;background:#f7f7f7;border-left:3px solid #ff9900"></div>
<div class="a t12" style="left:82.0px;top:643px;color:#ff9900;font-weight:bold">已超时：41</div>
<div class="a" style="left:198.0px;top:639px;width:117.0px;height:25px;background:#f7f7f7;border-left:3px solid #999"></div>
<div class="a t12" style="left:203.0px;top:643px;color:#999;font-weight:normal">未完成：0</div>
<div class="a" style="left:77.0px;top:669px;width:117.0px;height:25px;background:#f7f7f7;border-left:3px solid #2d8cf0"></div>
<div class="a t12" style="left:82.0px;top:673px;color:#2d8cf0;font-weight:bold">超时放行：0</div>
<div class="a" style="left:198.0px;top:669px;width:117.0px;height:25px;background:#f7f7f7;border-left:3px solid #f06a6a"></div>
<div class="a t12 m3" style="left:203.0px;top:673px;color:#f06a6a;font-weight:normal">问题工单：0</div>
<div class="a" style="left:327px;top:582px;font-size:16px;line-height:20px;color:#333">16</div>
<div class="a" style="left:327.0px;top:609px;width:117.5px;height:25px;background:#f7f7f7;border-left:3px solid #555"></div>
<div class="a t12 m3" style="left:332.0px;top:613px;color:#555;font-weight:normal">任务总数：41</div>
<div class="a" style="left:448.5px;top:609px;width:117.5px;height:25px;background:#f7f7f7;border-left:3px solid #19be6b"></div>
<div class="a t12" style="left:453.5px;top:613px;color:#19be6b;font-weight:bold">已完成：0</div>
<div class="a" style="left:327.0px;top:639px;width:117.5px;height:25px;background:#f7f7f7;border-left:3px solid #ff9900"></div>
<div class="a t12" style="left:332.0px;top:643px;color:#ff9900;font-weight:bold">已超时：41</div>
<div class="a" style="left:448.5px;top:639px;width:117.5px;height:25px;background:#f7f7f7;border-left:3px solid #999"></div>
<div class="a t12" style="left:453.5px;top:643px;color:#999;font-weight:normal">未完成：0</div>
<div class="a" style="left:327.0px;top:669px;width:117.5px;height:25px;background:#f7f7f7;border-left:3px solid #2d8cf0"></div>
<div class="a t12" style="left:332.0px;top:673px;color:#2d8cf0;font-weight:bold">超时放行：0</div>
<div class="a" style="left:448.5px;top:669px;width:117.5px;height:25px;background:#f7f7f7;border-left:3px solid #f06a6a"></div>
<div class="a t12 m3" style="left:453.5px;top:673px;color:#f06a6a;font-weight:normal">问题工单：0</div>
<div class="a" style="left:578px;top:582px;font-size:16px;line-height:20px;color:#333">17</div>
<div class="a" style="left:578.0px;top:609px;width:117.0px;height:25px;background:#f7f7f7;border-left:3px solid #555"></div>
<div class="a t12 m3" style="left:583.0px;top:613px;color:#555;font-weight:normal">任务总数：41</div>
<div class="a" style="left:699.0px;top:609px;width:117.0px;height:25px;background:#f7f7f7;border-left:3px solid #19be6b"></div>
<div class="a t12" style="left:704.0px;top:613px;color:#19be6b;font-weight:bold">已完成：0</div>
<div class="a" style="left:578.0px;top:639px;width:117.0px;height:25px;background:#f7f7f7;border-left:3px solid #ff9900"></div>
<div class="a t12" style="left:583.0px;top:643px;color:#ff9900;font-weight:bold">已超时：41</div>
<div class="a" style="left:699.0px;top:639px;width:117.0px;height:25px;background:#f7f7f7;border-left:3px solid #999"></div>
<div class="a t12" style="left:704.0px;top:643px;color:#999;font-weight:normal">未完成：0</div>
<div class="a" style="left:578.0px;top:669px;width:117.0px;height:25px;background:#f7f7f7;border-left:3px solid #2d8cf0"></div>
<div class="a t12" style="left:583.0px;top:673px;color:#2d8cf0;font-weight:bold">超时放行：0</div>
<div class="a" style="left:699.0px;top:669px;width:117.0px;height:25px;background:#f7f7f7;border-left:3px solid #f06a6a"></div>
<div class="a t12 m3" style="left:704.0px;top:673px;color:#f06a6a;font-weight:normal">问题工单：0</div>
<div class="a" style="left:828px;top:582px;font-size:16px;line-height:20px;color:#333">18</div>
<div class="a" style="left:828.0px;top:609px;width:117.5px;height:25px;background:#f7f7f7;border-left:3px solid #555"></div>
<div class="a t12 m3" style="left:833.0px;top:613px;color:#555;font-weight:normal">任务总数：45</div>
<div class="a" style="left:949.5px;top:609px;width:117.5px;height:25px;background:#f7f7f7;border-left:3px solid #19be6b"></div>
<div class="a t12" style="left:954.5px;top:613px;color:#19be6b;font-weight:bold">已完成：1</div>
<div class="a" style="left:828.0px;top:639px;width:117.5px;height:25px;background:#f7f7f7;border-left:3px solid #ff9900"></div>
<div class="a t12" style="left:833.0px;top:643px;color:#ff9900;font-weight:bold">已超时：44</div>
<div class="a" style="left:949.5px;top:639px;width:117.5px;height:25px;background:#f7f7f7;border-left:3px solid #999"></div>
<div class="a t12" style="left:954.5px;top:643px;color:#999;font-weight:normal">未完成：0</div>
<div class="a" style="left:828.0px;top:669px;width:117.5px;height:25px;background:#f7f7f7;border-left:3px solid #2d8cf0"></div>
<div class="a t12" style="left:833.0px;top:673px;color:#2d8cf0;font-weight:bold">超时放行：0</div>
<div class="a" style="left:949.5px;top:669px;width:117.5px;height:25px;background:#f7f7f7;border-left:3px solid #f06a6a"></div>
<div class="a t12 m3" style="left:954.5px;top:673px;color:#f06a6a;font-weight:normal">问题工单：1</div>
<div class="a" style="left:1079px;top:582px;font-size:16px;line-height:20px;color:#333">19</div>
<div class="a" style="left:1079.0px;top:609px;width:117.0px;height:25px;background:#f7f7f7;border-left:3px solid #555"></div>
<div class="a t12 m3" style="left:1084.0px;top:613px;color:#555;font-weight:normal">任务总数：45</div>
<div class="a" style="left:1200.0px;top:609px;width:117.0px;height:25px;background:#f7f7f7;border-left:3px solid #19be6b"></div>
<div class="a t12" style="left:1205.0px;top:613px;color:#19be6b;font-weight:bold">已完成：0</div>
<div class="a" style="left:1079.0px;top:639px;width:117.0px;height:25px;background:#f7f7f7;border-left:3px solid #ff9900"></div>
<div class="a t12" style="left:1084.0px;top:643px;color:#ff9900;font-weight:bold">已超时：45</div>
<div class="a" style="left:1200.0px;top:639px;width:117.0px;height:25px;background:#f7f7f7;border-left:3px solid #999"></div>
<div class="a t12" style="left:1205.0px;top:643px;color:#999;font-weight:normal">未完成：0</div>
<div class="a" style="left:1079.0px;top:669px;width:117.0px;height:25px;background:#f7f7f7;border-left:3px solid #2d8cf0"></div>
<div class="a t12" style="left:1084.0px;top:673px;color:#2d8cf0;font-weight:bold">超时放行：0</div>
<div class="a" style="left:1200.0px;top:669px;width:117.0px;height:25px;background:#f7f7f7;border-left:3px solid #f06a6a"></div>
<div class="a t12 m3" style="left:1205.0px;top:673px;color:#f06a6a;font-weight:normal">问题工单：0</div>
<div class="a" style="left:1329px;top:582px;font-size:16px;line-height:20px;color:#333">20</div>
<div class="a" style="left:1329.0px;top:609px;width:117.5px;height:25px;background:#f7f7f7;border-left:3px solid #555"></div>
<div class="a t12 m3" style="left:1334.0px;top:613px;color:#555;font-weight:normal">任务总数：45</div>
<div class="a" style="left:1450.5px;top:609px;width:117.5px;height:25px;background:#f7f7f7;border-left:3px solid #19be6b"></div>
<div class="a t12" style="left:1455.5px;top:613px;color:#19be6b;font-weight:bold">已完成：0</div>
<div class="a" style="left:1329.0px;top:639px;width:117.5px;height:25px;background:#f7f7f7;border-left:3px solid #ff9900"></div>
<div class="a t12" style="left:1334.0px;top:643px;color:#ff9900;font-weight:bold">已超时：45</div>
<div class="a" style="left:1450.5px;top:639px;width:117.5px;height:25px;background:#f7f7f7;border-left:3px solid #999"></div>
<div class="a t12" style="left:1455.5px;top:643px;color:#999;font-weight:normal">未完成：0</div>
<div class="a" style="left:1329.0px;top:669px;width:117.5px;height:25px;background:#f7f7f7;border-left:3px solid #2d8cf0"></div>
<div class="a t12" style="left:1334.0px;top:673px;color:#2d8cf0;font-weight:bold">超时放行：0</div>
<div class="a" style="left:1450.5px;top:669px;width:117.5px;height:25px;background:#f7f7f7;border-left:3px solid #f06a6a"></div>
<div class="a t12 m3" style="left:1455.5px;top:673px;color:#f06a6a;font-weight:normal">问题工单：0</div>
<div class="a" style="left:1580px;top:582px;font-size:16px;line-height:20px;color:#333">21</div>
<div class="a" style="left:1580.0px;top:609px;width:117.0px;height:25px;background:#f7f7f7;border-left:3px solid #555"></div>
<div class="a t12 m3" style="left:1585.0px;top:613px;color:#555;font-weight:normal">任务总数：45</div>
<div class="a" style="left:1701.0px;top:609px;width:117.0px;height:25px;background:#f7f7f7;border-left:3px solid #19be6b"></div>
<div class="a t12" style="left:1706.0px;top:613px;color:#19be6b;font-weight:bold">已完成：0</div>
<div class="a" style="left:1580.0px;top:639px;width:117.0px;height:25px;background:#f7f7f7;border-left:3px solid #ff9900"></div>
<div class="a t12" style="left:1585.0px;top:643px;color:#ff9900;font-weight:bold">已超时：45</div>
<div class="a" style="left:1701.0px;top:639px;width:117.0px;height:25px;background:#f7f7f7;border-left:3px solid #999"></div>
<div class="a t12" style="left:1706.0px;top:643px;color:#999;font-weight:normal">未完成：0</div>
<div class="a" style="left:1580.0px;top:669px;width:117.0px;height:25px;background:#f7f7f7;border-left:3px solid #2d8cf0"></div>
<div class="a t12" style="left:1585.0px;top:673px;color:#2d8cf0;font-weight:bold">超时放行：0</div>
<div class="a" style="left:1701.0px;top:669px;width:117.0px;height:25px;background:#f7f7f7;border-left:3px solid #f06a6a"></div>
<div class="a t12 m3" style="left:1706.0px;top:673px;color:#f06a6a;font-weight:normal">问题工单：0</div>
<div class="a" style="left:77px;top:714px;font-size:16px;line-height:20px;color:#333">22</div>
<div class="a" style="left:77.0px;top:741px;width:117.0px;height:25px;background:#f7f7f7;border-left:3px solid #555"></div>
<div class="a t12 m3" style="left:82.0px;top:745px;color:#555;font-weight:normal">任务总数：45</div>
<div class="a" style="left:198.0px;top:741px;width:117.0px;height:25px;background:#f7f7f7;border-left:3px solid #19be6b"></div>
<div class="a t12" style="left:203.0px;top:745px;color:#19be6b;font-weight:bold">已完成：0</div>
<div class="a" style="left:77.0px;top:771px;width:117.0px;height:25px;background:#f7f7f7;border-left:3px solid #ff9900"></div>
<div class="a t12" style="left:82.0px;top:775px;color:#ff9900;font-weight:bold">已超时：45</div>
<div class="a" style="left:198.0px;top:771px;width:117.0px;height:25px;background:#f7f7f7;border-left:3px solid #999"></div>
<div class="a t12" style="left:203.0px;top:775px;color:#999;font-weight:normal">未完成：0</div>
<div class="a" style="left:77.0px;top:801px;width:117.0px;height:25px;background:#f7f7f7;border-left:3px solid #2d8cf0"></div>
<div class="a t12" style="left:82.0px;top:805px;color:#2d8cf0;font-weight:bold">超时放行：0</div>
<div class="a" style="left:198.0px;top:801px;width:117.0px;height:25px;background:#f7f7f7;border-left:3px solid #f06a6a"></div>
<div class="a t12 m3" style="left:203.0px;top:805px;color:#f06a6a;font-weight:normal">问题工单：0</div>
<div class="a" style="left:327px;top:714px;font-size:16px;line-height:20px;color:#333">23</div>
<div class="a" style="left:327.0px;top:741px;width:117.5px;height:25px;background:#f7f7f7;border-left:3px solid #555"></div>
<div class="a t12 m3" style="left:332.0px;top:745px;color:#555;font-weight:normal">任务总数：45</div>
<div class="a" style="left:448.5px;top:741px;width:117.5px;height:25px;background:#f7f7f7;border-left:3px solid #19be6b"></div>
<div class="a t12" style="left:453.5px;top:745px;color:#19be6b;font-weight:bold">已完成：0</div>
<div class="a" style="left:327.0px;top:771px;width:117.5px;height:25px;background:#f7f7f7;border-left:3px solid #ff9900"></div>
<div class="a t12" style="left:332.0px;top:775px;color:#ff9900;font-weight:bold">已超时：45</div>
<div class="a" style="left:448.5px;top:771px;width:117.5px;height:25px;background:#f7f7f7;border-left:3px solid #999"></div>
<div class="a t12" style="left:453.5px;top:775px;color:#999;font-weight:normal">未完成：0</div>
<div class="a" style="left:327.0px;top:801px;width:117.5px;height:25px;background:#f7f7f7;border-left:3px solid #2d8cf0"></div>
<div class="a t12" style="left:332.0px;top:805px;color:#2d8cf0;font-weight:bold">超时放行：0</div>
<div class="a" style="left:448.5px;top:801px;width:117.5px;height:25px;background:#f7f7f7;border-left:3px solid #f06a6a"></div>
<div class="a t12 m3" style="left:453.5px;top:805px;color:#f06a6a;font-weight:normal">问题工单：0</div>
<div class="a" style="left:578px;top:714px;font-size:16px;line-height:20px;color:#333">24</div>
<div class="a" style="left:578.0px;top:741px;width:117.0px;height:25px;background:#f7f7f7;border-left:3px solid #555"></div>
<div class="a t12 m3" style="left:583.0px;top:745px;color:#555;font-weight:normal">任务总数：45</div>
<div class="a" style="left:699.0px;top:741px;width:117.0px;height:25px;background:#f7f7f7;border-left:3px solid #19be6b"></div>
<div class="a t12" style="left:704.0px;top:745px;color:#19be6b;font-weight:bold">已完成：0</div>
<div class="a" style="left:578.0px;top:771px;width:117.0px;height:25px;background:#f7f7f7;border-left:3px solid #ff9900"></div>
<div class="a t12" style="left:583.0px;top:775px;color:#ff9900;font-weight:bold">已超时：45</div>
<div class="a" style="left:699.0px;top:771px;width:117.0px;height:25px;background:#f7f7f7;border-left:3px solid #999"></div>
<div class="a t12" style="left:704.0px;top:775px;color:#999;font-weight:normal">未完成：0</div>
<div class="a" style="left:578.0px;top:801px;width:117.0px;height:25px;background:#f7f7f7;border-left:3px solid #2d8cf0"></div>
<div class="a t12" style="left:583.0px;top:805px;color:#2d8cf0;font-weight:bold">超时放行：0</div>
<div class="a" style="left:699.0px;top:801px;width:117.0px;height:25px;background:#f7f7f7;border-left:3px solid #f06a6a"></div>
<div class="a t12 m3" style="left:704.0px;top:805px;color:#f06a6a;font-weight:normal">问题工单：0</div>
<div class="a" style="left:828px;top:714px;font-size:16px;line-height:20px;color:#333">25</div>
<div class="a" style="left:828.0px;top:741px;width:117.5px;height:25px;background:#f7f7f7;border-left:3px solid #555"></div>
<div class="a t12 m3" style="left:833.0px;top:745px;color:#555;font-weight:normal">任务总数：45</div>
<div class="a" style="left:949.5px;top:741px;width:117.5px;height:25px;background:#f7f7f7;border-left:3px solid #19be6b"></div>
<div class="a t12" style="left:954.5px;top:745px;color:#19be6b;font-weight:bold">已完成：0</div>
<div class="a" style="left:828.0px;top:771px;width:117.5px;height:25px;background:#f7f7f7;border-left:3px solid #ff9900"></div>
<div class="a t12" style="left:833.0px;top:775px;color:#ff9900;font-weight:bold">已超时：45</div>
<div class="a" style="left:949.5px;top:771px;width:117.5px;height:25px;background:#f7f7f7;border-left:3px solid #999"></div>
<div class="a t12" style="left:954.5px;top:775px;color:#999;font-weight:normal">未完成：0</div>
<div class="a" style="left:828.0px;top:801px;width:117.5px;height:25px;background:#f7f7f7;border-left:3px solid #2d8cf0"></div>
<div class="a t12" style="left:833.0px;top:805px;color:#2d8cf0;font-weight:bold">超时放行：0</div>
<div class="a" style="left:949.5px;top:801px;width:117.5px;height:25px;background:#f7f7f7;border-left:3px solid #f06a6a"></div>
<div class="a t12 m3" style="left:954.5px;top:805px;color:#f06a6a;font-weight:normal">问题工单：0</div>
<div class="a" style="left:1079px;top:714px;font-size:16px;line-height:20px;color:#333">26</div>
<div class="a" style="left:1079.0px;top:741px;width:117.0px;height:25px;background:#f7f7f7;border-left:3px solid #555"></div>
<div class="a t12 m3" style="left:1084.0px;top:745px;color:#555;font-weight:normal">任务总数：45</div>
<div class="a" style="left:1200.0px;top:741px;width:117.0px;height:25px;background:#f7f7f7;border-left:3px solid #19be6b"></div>
<div class="a t12" style="left:1205.0px;top:745px;color:#19be6b;font-weight:bold">已完成：0</div>
<div class="a" style="left:1079.0px;top:771px;width:117.0px;height:25px;background:#f7f7f7;border-left:3px solid #ff9900"></div>
<div class="a t12" style="left:1084.0px;top:775px;color:#ff9900;font-weight:bold">已超时：45</div>
<div class="a" style="left:1200.0px;top:771px;width:117.0px;height:25px;background:#f7f7f7;border-left:3px solid #999"></div>
<div class="a t12" style="left:1205.0px;top:775px;color:#999;font-weight:normal">未完成：0</div>
<div class="a" style="left:1079.0px;top:801px;width:117.0px;height:25px;background:#f7f7f7;border-left:3px solid #2d8cf0"></div>
<div class="a t12" style="left:1084.0px;top:805px;color:#2d8cf0;font-weight:bold">超时放行：0</div>
<div class="a" style="left:1200.0px;top:801px;width:117.0px;height:25px;background:#f7f7f7;border-left:3px solid #f06a6a"></div>
<div class="a t12 m3" style="left:1205.0px;top:805px;color:#f06a6a;font-weight:normal">问题工单：0</div>
<div class="a" style="left:1329px;top:714px;font-size:16px;line-height:20px;color:#333">27</div>
<div class="a" style="left:1329.0px;top:741px;width:117.5px;height:25px;background:#f7f7f7;border-left:3px solid #555"></div>
<div class="a t12 m3" style="left:1334.0px;top:745px;color:#555;font-weight:normal">任务总数：45</div>
<div class="a" style="left:1450.5px;top:741px;width:117.5px;height:25px;background:#f7f7f7;border-left:3px solid #19be6b"></div>
<div class="a t12" style="left:1455.5px;top:745px;color:#19be6b;font-weight:bold">已完成：0</div>
<div class="a" style="left:1329.0px;top:771px;width:117.5px;height:25px;background:#f7f7f7;border-left:3px solid #ff9900"></div>
<div class="a t12" style="left:1334.0px;top:775px;color:#ff9900;font-weight:bold">已超时：45</div>
<div class="a" style="left:1450.5px;top:771px;width:117.5px;height:25px;background:#f7f7f7;border-left:3px solid #999"></div>
<div class="a t12" style="left:1455.5px;top:775px;color:#999;font-weight:normal">未完成：0</div>
<div class="a" style="left:1329.0px;top:801px;width:117.5px;height:25px;background:#f7f7f7;border-left:3px solid #2d8cf0"></div>
<div class="a t12" style="left:1334.0px;top:805px;color:#2d8cf0;font-weight:bold">超时放行：0</div>
<div class="a" style="left:1450.5px;top:801px;width:117.5px;height:25px;background:#f7f7f7;border-left:3px solid #f06a6a"></div>
<div class="a t12 m3" style="left:1455.5px;top:805px;color:#f06a6a;font-weight:normal">问题工单：0</div>
<div class="a" style="left:1580px;top:714px;font-size:16px;line-height:20px;color:#333">28</div>
<div class="a" style="left:1580.0px;top:741px;width:117.0px;height:25px;background:#f7f7f7;border-left:3px solid #555"></div>
<div class="a t12 m3" style="left:1585.0px;top:745px;color:#555;font-weight:normal">任务总数：45</div>
<div class="a" style="left:1701.0px;top:741px;width:117.0px;height:25px;background:#f7f7f7;border-left:3px solid #19be6b"></div>
<div class="a t12" style="left:1706.0px;top:745px;color:#19be6b;font-weight:bold">已完成：0</div>
<div class="a" style="left:1580.0px;top:771px;width:117.0px;height:25px;background:#f7f7f7;border-left:3px solid #ff9900"></div>
<div class="a t12" style="left:1585.0px;top:775px;color:#ff9900;font-weight:bold">已超时：45</div>
<div class="a" style="left:1701.0px;top:771px;width:117.0px;height:25px;background:#f7f7f7;border-left:3px solid #999"></div>
<div class="a t12" style="left:1706.0px;top:775px;color:#999;font-weight:normal">未完成：0</div>
<div class="a" style="left:1580.0px;top:801px;width:117.0px;height:25px;background:#f7f7f7;border-left:3px solid #2d8cf0"></div>
<div class="a t12" style="left:1585.0px;top:805px;color:#2d8cf0;font-weight:bold">超时放行：0</div>
<div class="a" style="left:1701.0px;top:801px;width:117.0px;height:25px;background:#f7f7f7;border-left:3px solid #f06a6a"></div>
<div class="a t12 m3" style="left:1706.0px;top:805px;color:#f06a6a;font-weight:normal">问题工单：0</div>
<div class="a" style="left:77px;top:845px;font-size:16px;line-height:20px;color:#333">29</div>
<div class="a" style="left:327px;top:845px;font-size:16px;line-height:20px;color:#333">30</div>
<div class="a" style="left:578px;top:845px;font-size:16px;line-height:20px;color:#333">31</div>
<div class="a" style="left:828px;top:845px;font-size:16px;line-height:20px;color:#c4c4c4">01</div>
<div class="a" style="left:1079px;top:845px;font-size:16px;line-height:20px;color:#c4c4c4">02</div>
<div class="a" style="left:1329px;top:845px;font-size:16px;line-height:20px;color:#c4c4c4">03</div>
<div class="a" style="left:1580px;top:845px;font-size:16px;line-height:20px;color:#c4c4c4">04</div>
<div class="a" style="left:1342px;top:652px;width:501px;height:185px;background:#fff;border-radius:4px;box-shadow:0 2px 12px rgba(0,0,0,0.18)"></div>
<div class="a t14" style="left:1357.5px;top:659px;color:#333">新消息提醒 ( 1 )</div>
<svg class="a" style="left:1820px;top:664px" width="10" height="10" viewBox="0 0 10 10"><path d="M0.5 0.5L9.5 9.5M9.5 0.5L0.5 9.5" stroke="#111" stroke-width="1.3"/></svg>
<div class="a" style="left:1342px;top:688px;width:501px;height:1px;background:#e8e8e8"></div>
<div class="a" style="left:1352px;top:704.5px;width:11px;height:11px;border-radius:6px;background:#f00"></div>
<div class="a b" style="left:1372px;top:700px;font-size:15px;line-height:20px;color:#222">预警信息</div>
<div class="a t14" style="left:1720px;width:111px;text-align:right;top:699px;color:#222">2025-12-29 16:21</div>
<div class="a t14" style="left:1372.5px;top:731.0px;color:#333">提前30天预警存在44条记录</div>
<div class="a t14" style="left:1372.5px;top:761.5px;color:#333">提前60天预警存在46条记录</div>
<div class="a t14" style="left:1372.5px;top:792.0px;color:#333">方案一：报废预警存在1条记录</div>
<div class="a" style="left:46px;top:866px;width:1814px;height:22px;background:#fff;border-top:1px solid #dcdfe6"></div>
<div class="a t14" style="left:67px;top:867px;color:#333">就绪</div>
<div class="a t14" style="left:444px;top:867px;color:#333">用户：</div>
<div class="a" style="left:476px;top:866px;width:79px;height:30px;border-radius:7px 7px 40px 40px/7px 7px 18px 18px;overflow:hidden">
<div class="a" style="left:0px;top:0;width:6px;height:13px;background:#e8ecef"></div>
<div class="a" style="left:0px;top:13px;width:6px;height:17px;background:#b0b5af"></div>
<div class="a" style="left:6px;top:0;width:13px;height:13px;background:#e0dddc"></div>
<div class="a" style="left:6px;top:13px;width:13px;height:17px;background:#a9aea8"></div>
<div class="a" style="left:19px;top:0;width:14px;height:13px;background:#d6d9dc"></div>
<div class="a" style="left:19px;top:13px;width:14px;height:17px;background:#a2a8a3"></div>
<div class="a" style="left:33px;top:0;width:13px;height:13px;background:#c2c1c3"></div>
<div class="a" style="left:33px;top:13px;width:13px;height:17px;background:#939b97"></div>
<div class="a" style="left:46px;top:0;width:14px;height:13px;background:#e4ecec"></div>
<div class="a" style="left:46px;top:13px;width:14px;height:17px;background:#aab2ab"></div>
<div class="a" style="left:60px;top:0;width:19px;height:13px;background:#f8f8f8"></div>
<div class="a" style="left:60px;top:13px;width:19px;height:17px;background:#b5b9b3"></div>
</div>
<div class="a t14" style="left:877px;top:867px;color:#333">数据库：客户演示</div>
<div class="a t14" style="left:1338px;top:867px;color:#333">2022年第1期</div>
<div class="a t14" style="left:1740px;width:100px;text-align:right;top:867px;color:#333">在线：13人</div>
</body></html>
